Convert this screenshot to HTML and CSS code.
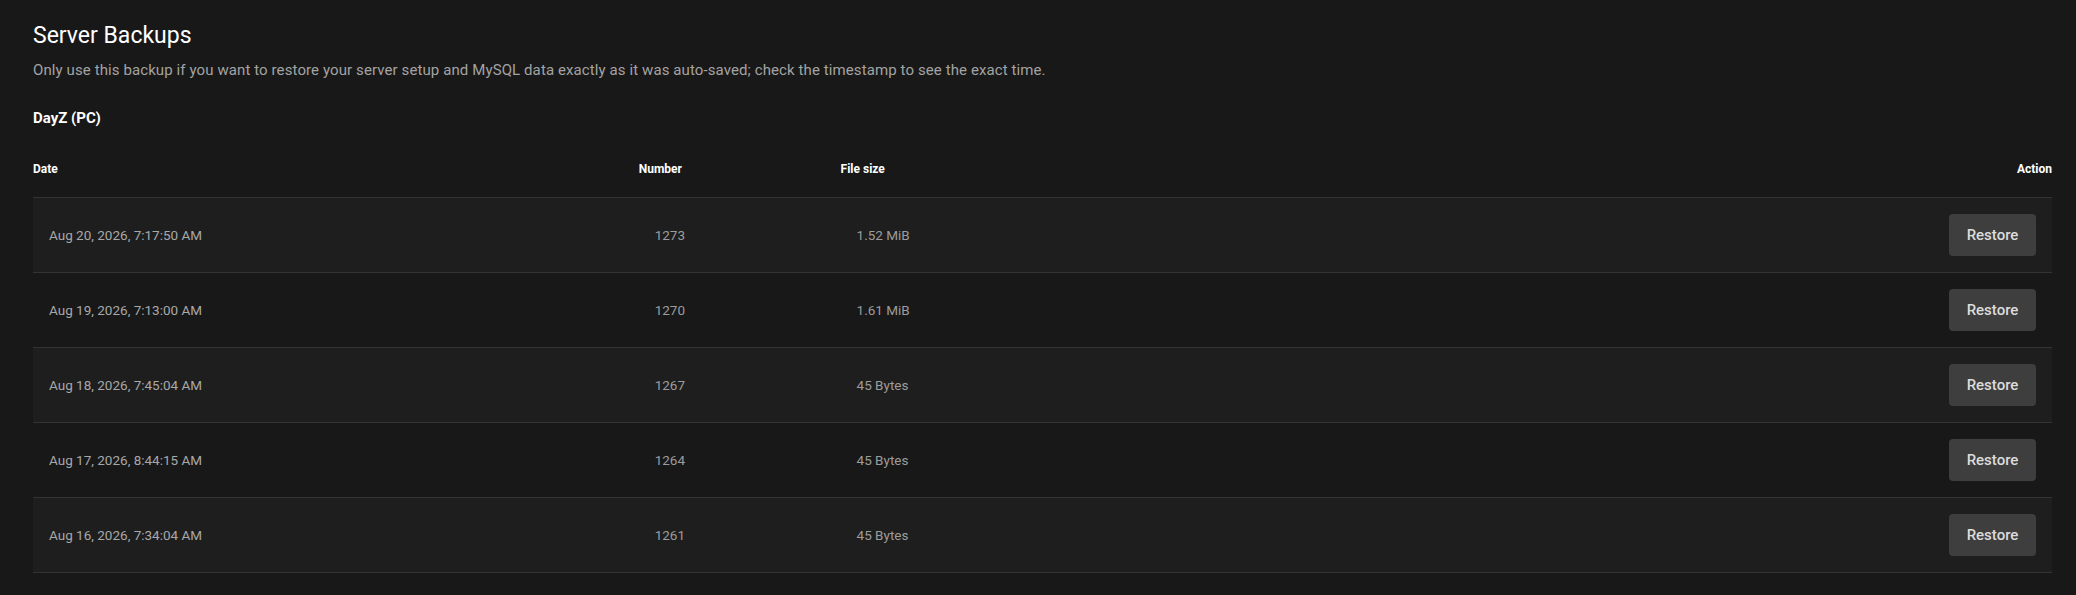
FILE: index.html
```html
<!DOCTYPE html>
<html lang="en">
<head>
<meta charset="utf-8">
<title>Server Backups</title>
<link rel="stylesheet" href="styles.css">
</head>
<body>
<main class="page">
  <h1 class="title">Server Backups</h1>
  <p class="subtitle">Only use this backup if you want to restore your server setup and MySQL data exactly as it was auto-saved; check the timestamp to see the exact time.</p>
  <h2 class="game">DayZ (PC)</h2>
  <div class="table">
    <div class="row head">
      <div class="cell">Date</div>
      <div class="cell">Number</div>
      <div class="cell">File size</div>
      <div class="cell action">Action</div>
    </div>
    <div class="row item alt">
      <div class="cell">Aug 20, 2026, 7:17:50 AM</div>
      <div class="cell num">1273</div>
      <div class="cell num">1.52 MiB</div>
      <div class="cell action"><button class="btn">Restore</button></div>
    </div>
    <div class="row item">
      <div class="cell">Aug 19, 2026, 7:13:00 AM</div>
      <div class="cell num">1270</div>
      <div class="cell num">1.61 MiB</div>
      <div class="cell action"><button class="btn">Restore</button></div>
    </div>
    <div class="row item alt">
      <div class="cell">Aug 18, 2026, 7:45:04 AM</div>
      <div class="cell num">1267</div>
      <div class="cell num">45 Bytes</div>
      <div class="cell action"><button class="btn">Restore</button></div>
    </div>
    <div class="row item">
      <div class="cell">Aug 17, 2026, 8:44:15 AM</div>
      <div class="cell num">1264</div>
      <div class="cell num">45 Bytes</div>
      <div class="cell action"><button class="btn">Restore</button></div>
    </div>
    <div class="row item alt last">
      <div class="cell">Aug 16, 2026, 7:34:04 AM</div>
      <div class="cell num">1261</div>
      <div class="cell num">45 Bytes</div>
      <div class="cell action"><button class="btn">Restore</button></div>
    </div>
  </div>
</main>
</body>
</html>
```

FILE: styles.css
```css
html, body {
  margin: 0;
  padding: 0;
  background: #181818;
}

body {
  font-family: Roboto, "Liberation Sans", sans-serif;
  color: #ffffff;
}

.page {
  padding: 21px 24px 0 33px;
}

.title {
  margin: 0;
  font-size: 23px;
  font-weight: 400;
  line-height: 30px;
  color: #ffffff;
}

.subtitle {
  margin: 8px 0 0;
  font-size: 15px;
  letter-spacing: 0.1px;
  line-height: 22px;
  color: #a3a3a3;
}

.game {
  margin: 26px 0 0;
  font-size: 15px;
  font-weight: 700;
  line-height: 22px;
  color: #ffffff;
}

.table {
  margin-top: 32px;
}

.row {
  display: grid;
  grid-template-columns: 30% 10% 1fr auto;
  align-items: center;
}

.head {
  padding-bottom: 20px;
  font-size: 12px;
  font-weight: 700;
  line-height: 16px;
  color: #ffffff;
}

.item {
  height: 74px;
  border-top: 1px solid #333333;
  font-size: 13.5px;
  color: #a8a8a8;
}

.item.alt {
  background: #1e1e1e;
}

.item.last {
  border-bottom: 1px solid #333333;
}

.item .cell {
  padding: 0 16px;
}

.item .num {
  color: #9c9c9c;
}

.cell.action {
  text-align: right;
}

.btn {
  width: 87px;
  height: 42px;
  border: 0;
  border-radius: 4px;
  background: #3e3e3e;
  color: #dcdcdc;
  font-family: Roboto, "Liberation Sans", sans-serif;
  font-size: 15px;
  font-weight: 500;
  cursor: pointer;
}
```
